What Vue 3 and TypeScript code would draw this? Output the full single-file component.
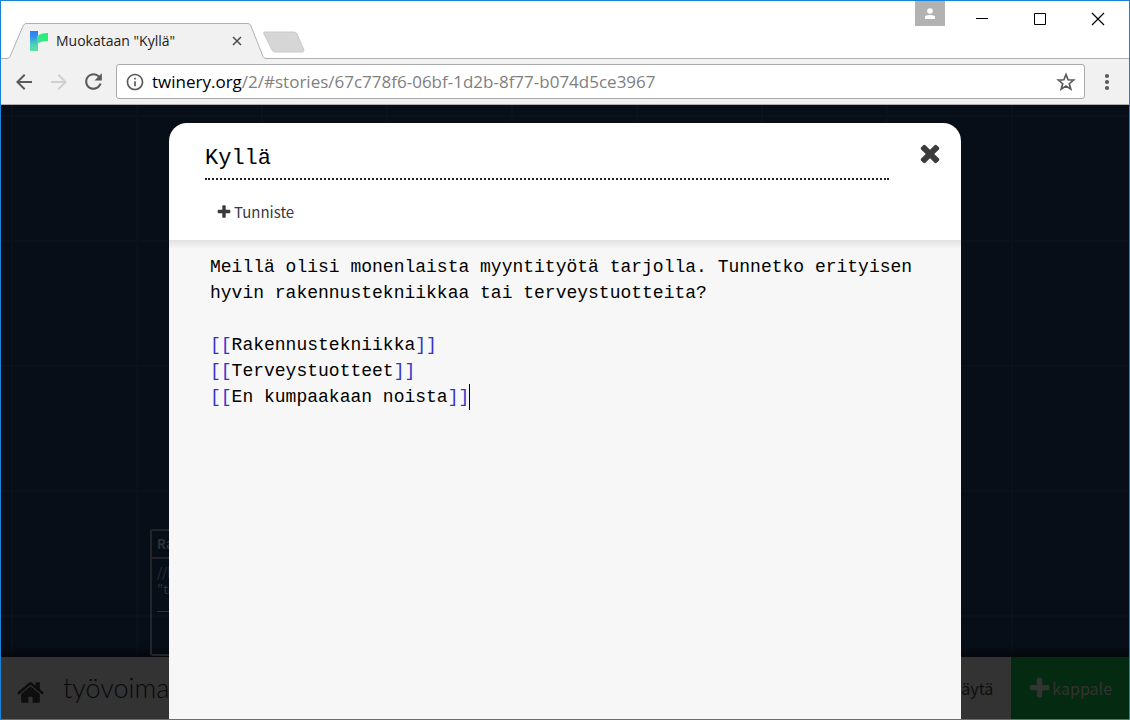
<script setup lang="ts">
import { ref } from 'vue'

interface LinkLine {
  id: number
  target: string
}

const passageName = ref('Kyllä')
const prose = 'Meillä olisi monenlaista myyntityötä tarjolla. Tunnetko erityisen hyvin rakennustekniikkaa tai terveystuotteita?'
const links: LinkLine[] = [
  { id: 1, target: 'Rakennustekniikka' },
  { id: 2, target: 'Terveystuotteet' },
  { id: 3, target: 'En kumpaakaan noista' },
]

const plusPath =
  'M1600 736v192q0 40-28 68t-68 28h-416v416q0 40-28 68t-68 28h-192q-40 0-68-28t-28-68v-416h-416q-40 0-68-28t-28-68v-192q0-40 28-68t68-28h416v-416q0-40 28-68t68-28h192q40 0 68 28t28 68v416h416q40 0 68 28t28 68z'
</script>

<template>
  <div class="window">
    <header class="tabstrip">
      <div class="tab">
        <svg class="tab-shape" width="260" height="36" viewBox="0 0 260 36" aria-hidden="true">
          <path d="M0 35.500H1Q3 35.500 4 33.500L17 3Q18.500 .5 20 .5H242Q244 .5 245 3L257 33.500Q258 35.500 260 35.500V36H0Z" fill="#f1f1f1" />
          <path d="M0 35.500H1Q3 35.500 4 33.500L17 3Q18.500 .5 20 .5H242Q244 .5 245 3L257 33.500Q258 35.500 260 35.500" fill="none" stroke="#b0b0b0" />
        </svg>
        <svg class="favicon" width="18" height="20" viewBox="0 0 18 20" aria-hidden="true">
          <defs>
            <linearGradient id="stem" x1="0" y1="0" x2="0" y2="1">
              <stop offset="0" stop-color="#2b7cf5" />
              <stop offset="0.300" stop-color="#3391ea" />
              <stop offset="0.700" stop-color="#4fd3b4" />
              <stop offset="1" stop-color="#5be3a2" />
            </linearGradient>
            <linearGradient id="branch" x1="0" y1="1" x2="1" y2="0">
              <stop offset="0" stop-color="#50dc9c" />
              <stop offset="1" stop-color="#17f56a" />
            </linearGradient>
          </defs>
          <path d="M0 0H8V20H0Z" fill="url(#stem)" />
          <path d="M7 5Q11 2 18 2V10Q11 10 7 13Z" fill="url(#branch)" />
        </svg>
        <span class="tab-title">Muokataan "Kyllä"</span>
        <button class="icon-button tab-close" aria-label="Sulje välilehti">
          <svg width="12" height="12" viewBox="0 0 12 12"><path d="M2 2L10 10M10 2L2 10" stroke="#4c4c4c" stroke-width="1.500" /></svg>
        </button>
      </div>
      <button class="icon-button new-tab" aria-label="Uusi välilehti">
        <svg width="44" height="24" viewBox="0 0 44 24">
          <path d="M3 2H32Q34 2 35 4L42 20Q42 22 40 22H13Q11 22 10 20L2 4Q1 2 3 2Z" fill="#d6d6d6" stroke="#c9c9c9" />
        </svg>
      </button>
      <div class="window-controls">
        <button class="icon-button profile" aria-label="Profiili">
          <svg width="12" height="12" viewBox="0 0 12 12" fill="#fff"><circle cx="6" cy="3" r="2.800" /><path d="M1 11V9Q1 7 6 7T11 9V11Z" /></svg>
        </button>
        <button class="icon-button control" aria-label="Pienennä">
          <svg width="14" height="14" viewBox="0 0 14 14"><path d="M1 6.500H13" stroke="#000" /></svg>
        </button>
        <button class="icon-button control" aria-label="Suurenna">
          <svg width="14" height="14" viewBox="0 0 14 14"><path d="M1.500 1.500H12.500V12.500H1.500Z" stroke="#000" fill="none" /></svg>
        </button>
        <button class="icon-button control" aria-label="Sulje">
          <svg width="14" height="14" viewBox="0 0 14 14"><path d="M1 1L13 13M13 1L1 13" stroke="#000" stroke-width="1.200" /></svg>
        </button>
      </div>
    </header>

    <nav class="toolbar">
      <button class="icon-button nav-button" aria-label="Takaisin">
        <svg width="24" height="24" viewBox="0 0 24 24" fill="#5a5a5a"><path d="M20 11H7.830l5.590-5.590L12 4l-8 8 8 8 1.410-1.410L7.830 13H20v-2z" /></svg>
      </button>
      <button class="icon-button nav-button" aria-label="Eteenpäin" disabled>
        <svg width="24" height="24" viewBox="0 0 24 24" fill="#d0d0d0"><path d="M12 4l-1.410 1.410L16.170 11H4v2h12.170l-5.580 5.590L12 20l8-8z" /></svg>
      </button>
      <button class="icon-button nav-button" aria-label="Lataa uudelleen">
        <svg width="25" height="25" viewBox="0 0 24 24" fill="#5a5a5a"><path d="M17.650 6.350C16.200 4.900 14.210 4 12 4c-4.420 0-7.990 3.580-7.990 8s3.570 8 7.990 8c3.730 0 6.840-2.550 7.730-6h-2.080c-.82 2.330-3.040 4-5.650 4-3.310 0-6-2.690-6-6s2.690-6 6-6c1.660 0 3.140.69 4.220 1.780L13 11h7V4l-2.350 2.350z" /></svg>
      </button>
      <div class="omnibox">
        <svg width="20" height="20" viewBox="0 0 24 24" fill="#5a5a5a" aria-hidden="true"><path d="M11 17h2v-6h-2v6zm1-15C6.480 2 2 6.480 2 12s4.480 10 10 10 10-4.480 10-10S17.520 2 12 2zm0 18c-4.410 0-8-3.590-8-8s3.590-8 8-8 8 3.590 8 8-3.590 8-8 8zM11 9h2V7h-2v2z" /></svg>
        <div class="address" role="textbox" aria-label="Osoite" contenteditable="true" spellcheck="false"><span class="host">twinery.org</span>/2/#stories/67c778f6-06bf-1d2b-8f77-b074d5ce3967</div>
        <button class="icon-button" aria-label="Lisää kirjanmerkki">
          <svg width="20" height="20" viewBox="0 0 20 20"><path d="M10 2.500L12.100 7.800L17.600 8.100L13.300 11.700L14.800 17.200L10 14.100L5.200 17.200L6.700 11.700L2.400 8.100L7.900 7.800Z" fill="none" stroke="#5a5a5a" stroke-width="1.700" /></svg>
        </button>
      </div>
      <button class="icon-button menu-button" aria-label="Valikko">
        <svg width="8" height="24" viewBox="0 0 8 24" fill="#5a5a5a"><circle cx="4" cy="6" r="2.100" /><circle cx="4" cy="12" r="2.100" /><circle cx="4" cy="18" r="2.100" /></svg>
      </button>
    </nav>

    <main class="page">
      <div class="story-map">
        <article class="passage">
          <h2 class="passage-title">Rakennus</h2>
          <p class="passage-excerpt">//Myyjä//<br />"tarjous"</p>
          <hr class="passage-rule" />
        </article>
      </div>

      <footer class="story-bar">
        <a class="home" href="#stories" aria-label="Tarinat">
          <svg width="29" height="29" viewBox="0 0 1792 1792" fill="#0e0e0e"><path d="M1472 992v480q0 26-19 45t-45 19h-384v-384h-256v384h-384q-26 0-45-19t-19-45v-480q0-1 .5-3t.5-3l575-474 575 474q1 2 1 6zm223-69l-62 74q-8 9-21 11h-3q-13 0-21-7l-692-577-692 577q-12 8-24 7-13-2-21-11l-62-74q-8-10-7-23.500t11-21.500l719-599q32-26 76-26t76 26l244 204v-195q0-14 9-23t23-9h192q14 0 23 9t9 23v408l219 182q10 8 11 21.500t-7 23.500z" /></svg>
        </a>
        <button class="story-name">työvoima</button>
        <button class="bar-button">Näytä</button>
        <button class="bar-button add-passage">
          <svg width="25" height="25" viewBox="0 0 1792 1792" fill="#333"><path :d="plusPath" /></svg>
          kappale
        </button>
      </footer>

      <section class="dialog" role="dialog" aria-label="Kyllä">
        <div class="dialog-head">
          <div class="title-row">
            <input v-model="passageName" class="name-input" type="text" aria-label="Kappaleen nimi" spellcheck="false" />
            <button class="icon-button dialog-close" aria-label="Sulje ikkuna">
              <svg width="28" height="28" viewBox="0 0 1792 1792" fill="#3b3b3b"><path d="M1490 1322q0 40-28 68l-136 136q-28 28-68 28t-68-28l-294-294-294 294q-28 28-68 28t-68-28l-136-136q-28-28-28-68t28-68l294-294-294-294q-28-28-28-68t28-68l136-136q28-28 68-28t68 28l294 294 294-294q28-28 68-28t68 28l136 136q28 28 28 68t-28 68l-294 294 294 294q28 28 28 68z" /></svg>
            </button>
          </div>
          <button class="tag-button">
            <svg width="16" height="16" viewBox="0 0 1792 1792" fill="#3b3b3b"><path :d="plusPath" /></svg>
            Tunniste
          </button>
        </div>
        <div class="editor" role="textbox" aria-multiline="true" aria-label="Kappaleen teksti" contenteditable="true" spellcheck="false">
          <p class="line">{{ prose }}</p>
          <p class="line"><br /></p>
          <p v-for="(link, i) in links" :key="link.id" class="line"><span class="bracket">[[</span>{{ link.target }}<span class="bracket">]]</span><span v-if="i === links.length - 1" class="caret"></span></p>
        </div>
      </section>
    </main>
  </div>
</template>

<style>
body {
  margin: 0;
}
</style>

<style scoped>
.window {
  box-sizing: border-box;
  display: flex;
  flex-direction: column;
  height: 100vh;
  border: 1px solid #1883d7;
  background: #fff;
  overflow: hidden;
}

button {
  font: inherit;
  color: inherit;
  border: 0;
  padding: 0;
  background: none;
}

svg {
  display: block;
  flex: none;
}

.icon-button {
  display: flex;
  align-items: center;
  justify-content: center;
}

/* Tab strip */
.tabstrip {
  display: flex;
  flex: none;
  align-items: flex-end;
  height: 58px;
  background: linear-gradient(#b0b0b0, #b0b0b0) bottom / 100% 1px no-repeat;
}

.tab {
  position: relative;
  display: flex;
  align-items: center;
  box-sizing: border-box;
  width: 260px;
  height: 36px;
  margin-left: 5px;
  padding: 0 23px 0 24px;
}

.tab-shape {
  position: absolute;
  left: 0;
  top: 0;
}

.favicon {
  position: relative;
}

.tab-title {
  position: relative;
  flex: 1;
  margin-left: 8px;
  font: 14px/20px "Open Sans", sans-serif;
  color: #222;
  white-space: nowrap;
}

.tab-close {
  position: relative;
}

.new-tab {
  align-self: flex-end;
  margin: 0 0 5px -4px;
}

.window-controls {
  display: flex;
  align-self: flex-start;
  margin-left: auto;
  padding-right: 2px;
}

.profile {
  width: 30px;
  height: 25px;
  margin-right: 8px;
  background: #b2b2b2;
}

.control {
  width: 58px;
  height: 36px;
}

/* Toolbar */
.toolbar {
  display: flex;
  flex: none;
  align-items: center;
  box-sizing: border-box;
  height: 46px;
  padding: 0 18px 0 5px;
  background: #f1f1f1;
  border-bottom: 1px solid #b0b0b0;
}

.nav-button {
  width: 35px;
  height: 32px;
}

.omnibox {
  display: flex;
  flex: 1;
  align-items: center;
  box-sizing: border-box;
  height: 35px;
  margin: 0 18px 0 5px;
  padding: 0 8px;
  border: 1px solid #a9a9a9;
  border-radius: 3px;
  background: #fff;
}

.address {
  flex: 1;
  min-width: 0;
  margin-left: 7px;
  font: 17px/24px "Open Sans", sans-serif;
  color: #808080;
  white-space: nowrap;
  overflow: hidden;
  outline: none;
}

.host {
  color: #000;
}

/* Story map */
.page {
  position: relative;
  display: flex;
  flex: 1;
  flex-direction: column;
  min-height: 0;
}

.story-map {
  position: relative;
  flex: 1;
  overflow: hidden;
  background:
    linear-gradient(transparent, #05080d) bottom / 100% 12px no-repeat,
    linear-gradient(#09111a 2px, transparent 2px) 0 10px / 125px 125px,
    linear-gradient(90deg, #09111a 2px, transparent 2px) 10px 0 / 125px 125px,
    #070e17;
}

.passage {
  position: absolute;
  left: 149px;
  bottom: 1px;
  box-sizing: border-box;
  width: 127px;
  height: 127px;
  border: 2px solid #22262b;
  border-radius: 3px;
  font-family: "Noto Sans CJK SC", sans-serif;
  color: #2e3338;
}

.passage-title {
  margin: 0;
  padding: 0 5px;
  border-bottom: 2px solid #22262b;
  font-size: 13px;
  font-weight: 700;
  line-height: 26px;
}

.passage-excerpt {
  margin: 0;
  padding: 4px 5px;
  font-size: 13px;
  line-height: 17px;
}

.passage-rule {
  margin: 10px 5px;
  border: 0;
  border-top: 1px solid #2e3338;
}

/* Story bar */
.story-bar {
  display: flex;
  flex: none;
  align-items: stretch;
  height: 62px;
  background: #333;
  color: #0e0e0e;
  font: 16px/24px "Noto Sans CJK SC", sans-serif;
}

.home {
  display: flex;
  align-items: center;
  padding: 8px 18px 0 15px;
}

.story-name {
  font: 300 27px/32px Lato, sans-serif;
  color: #080808;
  margin-right: auto;
}

.bar-button {
  padding: 0 18px;
}

.add-passage {
  display: flex;
  align-items: center;
  padding: 0 17px 0 16px;
  background: #042a12;
  color: #333;
}

/* Passage dialog */
.dialog {
  position: absolute;
  top: 18px;
  bottom: 0;
  left: 0;
  right: 0;
  display: flex;
  flex-direction: column;
  width: 792px;
  max-width: calc(100% - 48px);
  margin: 0 auto;
  border-radius: 18px 18px 0 0;
  background: #fff;
  overflow: hidden;
}

.dialog-head {
  flex: none;
  box-sizing: border-box;
  height: 117px;
  padding: 16px 17px 0 36px;
}

.title-row {
  display: flex;
  align-items: flex-start;
}

.name-input {
  flex: 1;
  box-sizing: border-box;
  min-width: 0;
  height: 41px;
  margin-right: 27px;
  padding: 0;
  border: 0;
  border-bottom: 2px dotted #222;
  background: none;
  font: 22px/32px "Liberation Mono", monospace;
  color: #000;
  outline: none;
}

.tag-button {
  display: flex;
  align-items: center;
  gap: 2px;
  margin: 20px 0 0 11px;
  font: 15px/24px "Noto Sans CJK SC", sans-serif;
  color: #3b3b3b;
}

.editor {
  flex: 1;
  padding: 14px 36px 14px 41px;
  background: linear-gradient(#e2e2e2, #f7f7f7) top / 100% 9px no-repeat, #f7f7f7;
  font: 18px/26px "Liberation Mono", monospace;
  color: #000;
  outline: none;
}

.line {
  margin: 0;
}

.bracket {
  color: #3333cc;
}

.caret {
  display: inline-block;
  height: 26px;
  border-left: 1px solid #000;
  vertical-align: top;
}
</style>
